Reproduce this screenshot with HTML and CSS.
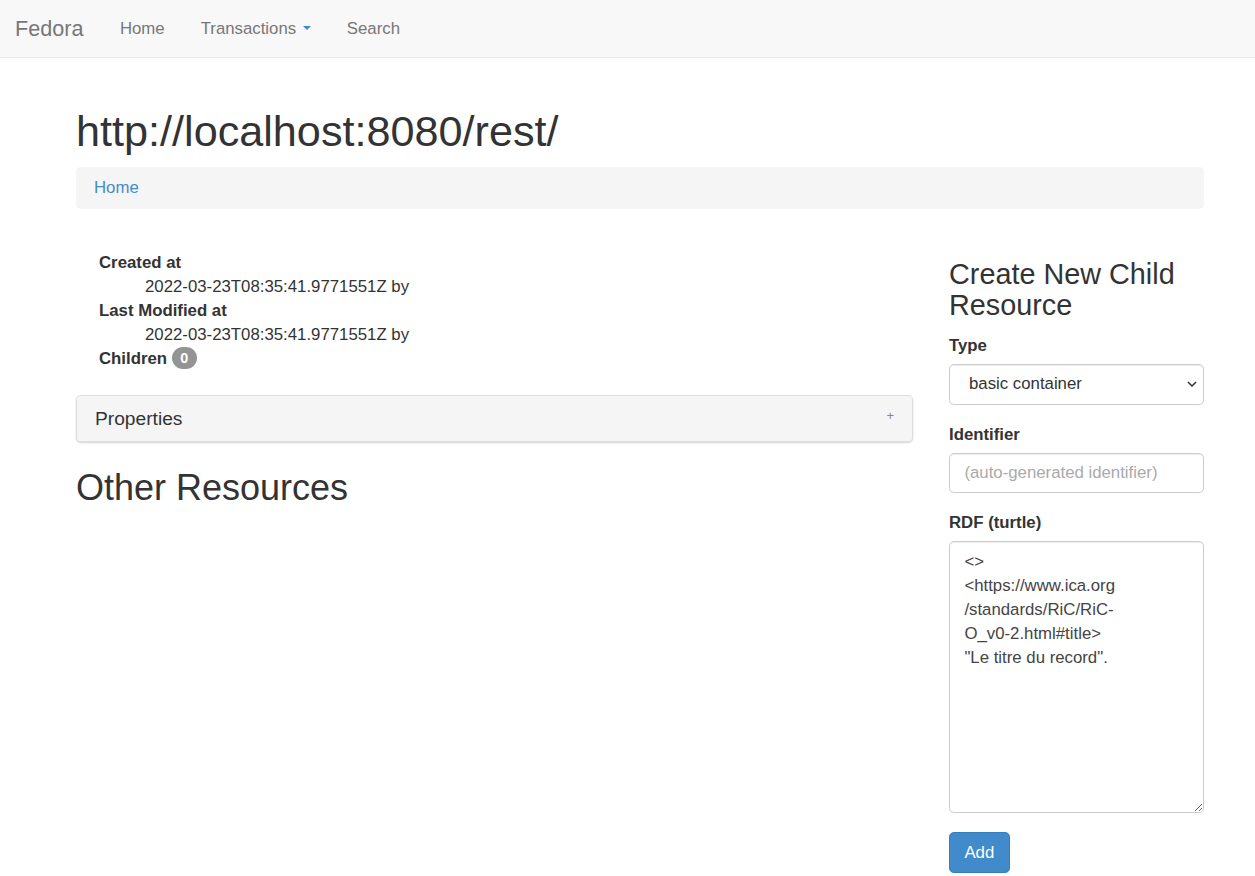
FILE: index.html
```html
<!DOCTYPE html>
<html lang="en">
<head>
<meta charset="utf-8">
<title>Fedora</title>
<link rel="stylesheet" href="styles.css">
</head>
<body>
<nav class="navbar">
  <a class="brand" href="#">Fedora</a>
  <ul class="nav">
    <li><a href="#">Home</a></li>
    <li><a href="#">Transactions <span class="caret"></span></a></li>
    <li><a href="#">Search</a></li>
  </ul>
</nav>
<div class="container">
  <h1 class="page-title">http://localhost:8080/rest/</h1>
  <ol class="breadcrumb">
    <li><a href="#">Home</a></li>
  </ol>
  <div class="row">
    <div class="main-col">
      <dl class="meta">
        <dt>Created at</dt>
        <dd>2022-03-23T08:35:41.9771551Z by</dd>
        <dt>Last Modified at</dt>
        <dd>2022-03-23T08:35:41.9771551Z by</dd>
        <dt>Children <span class="badge">0</span></dt>
      </dl>
      <div class="panel">
        <div class="panel-heading">
          <span class="panel-title">Properties</span>
          <span class="toggle">+</span>
        </div>
      </div>
      <h2 class="section-title">Other Resources</h2>
    </div>
    <div class="side-col">
      <h3 class="side-title">Create New Child Resource</h3>
      <form class="child-form">
        <div class="form-group">
          <label for="type">Type</label>
          <div class="select-wrap">
            <select id="type" class="form-control select-control">
              <option>basic container</option>
              <option>binary</option>
            </select>
            <svg class="select-arrow" width="10" height="6" viewBox="0 0 10 6" aria-hidden="true"><path d="M1 1 L5 5 L9 1" fill="none" stroke="#333" stroke-width="1.5"/></svg>
          </div>
        </div>
        <div class="form-group">
          <label for="ident">Identifier</label>
          <input id="ident" class="form-control" type="text" placeholder="(auto-generated identifier)">
        </div>
        <div class="form-group">
          <label for="rdf">RDF (turtle)</label>
          <textarea id="rdf" class="form-control rdf-area">&lt;&gt;
&lt;https://www.ica.org
/standards/RiC/RiC-
O_v0-2.html#title&gt;
"Le titre du record".</textarea>
        </div>
        <button type="button" class="btn-primary">Add</button>
      </form>
    </div>
  </div>
</div>
</body>
</html>
```

FILE: styles.css
```css
* { box-sizing: border-box; }

html, body {
  margin: 0;
  padding: 0;
  background: #fff;
}

body {
  font-family: "Liberation Sans", Arial, Helvetica, sans-serif;
  font-size: 16.8px;
  line-height: 24px;
  color: #333;
}

a { color: #428bca; text-decoration: none; }

/* Navbar */
.navbar {
  display: flex;
  align-items: center;
  height: 58px;
  background: #f8f8f8;
  border-bottom: 1px solid #e7e7e7;
}

.brand {
  font-size: 21.6px;
  line-height: 24px;
  color: #777;
  padding: 0 18.5px 0 15px;
}

.nav {
  display: flex;
  list-style: none;
  margin: 0;
  padding: 0;
}

.nav a {
  display: block;
  padding: 0 18px;
  color: #777;
  line-height: 24px;
}

.caret {
  display: inline-block;
  width: 0;
  height: 0;
  vertical-align: middle;
  border-top: 4.6px solid #428bca;
  border-left: 4.6px solid transparent;
  border-right: 4.6px solid transparent;
  margin-top: -2px;
  margin-left: 2px;
}

/* Container */
.container {
  width: 1128px;
  margin-left: 76px;
  padding-top: 24px;
}

.page-title {
  font-size: 43.2px;
  font-weight: normal;
  line-height: 1.1;
  margin: 26px 0 11px;
}

.breadcrumb {
  list-style: none;
  margin: 0 0 24px;
  padding: 9px 18px;
  background: #f5f5f5;
  border-radius: 4.8px;
}

.row {
  display: flex;
  gap: 36px;
}

.main-col { width: 837px; }
.side-col { width: 255px; }

/* Metadata */
.meta {
  margin: 0 0 24px;
  padding: 18px 0 0 23px;
}

.meta dt { font-weight: bold; }
.meta dd { margin-left: 46px; }

.badge {
  display: inline-block;
  min-width: 12px;
  padding: 3.6px 8.4px;
  font-size: 14.4px;
  font-weight: bold;
  line-height: 1;
  color: #fff;
  text-align: center;
  vertical-align: middle;
  background: #949494;
  border-radius: 12px;
  position: relative;
  top: -1px;
}

/* Panel */
.panel {
  border: 1px solid #ddd;
  border-radius: 4.8px;
  background: #fff;
  box-shadow: 0 1px 2px rgba(0, 0, 0, 0.18);
  margin-bottom: 26px;
}

.panel-heading {
  display: flex;
  justify-content: space-between;
  align-items: center;
  background: #f5f5f5;
  padding: 12px 18px;
  border-radius: 4px;
}

.panel-title {
  font-size: 19.2px;
  line-height: 21px;
  color: #333;
}

.toggle {
  font-size: 13px;
  color: #888;
  line-height: 21px;
  position: relative;
  top: -3px;
}

.section-title {
  font-size: 36px;
  font-weight: normal;
  line-height: 1.1;
  margin: 26px 0 12px;
}

/* Side form */
.side-title {
  font-size: 28.8px;
  font-weight: normal;
  line-height: 1.1;
  margin: 26px 0 12px;
}

.form-group { margin-bottom: 18px; }

.form-group label {
  display: block;
  font-weight: bold;
  margin-bottom: 6px;
}

.form-control {
  display: block;
  width: 100%;
  height: 40.8px;
  padding: 7.2px 14.4px;
  font-family: inherit;
  font-size: 16.8px;
  line-height: 24px;
  color: #555;
  background: #fff;
  border: 1px solid #ccc;
  border-radius: 4.8px;
  box-shadow: inset 0 1px 1px rgba(0, 0, 0, 0.075);
}

.select-wrap { position: relative; }

.select-control {
  -webkit-appearance: none;
  appearance: none;
  padding-left: 19px;
  color: #333;
}

.select-arrow {
  position: absolute;
  right: 7px;
  top: 17px;
  pointer-events: none;
}

.form-control::placeholder { color: #aaa; }

.rdf-area {
  height: 272px;
  resize: vertical;
  color: #444;
}

.btn-primary {
  display: inline-block;
  margin-top: 1px;
  padding: 7.2px 14.4px;
  font-family: inherit;
  font-size: 16.8px;
  line-height: 24px;
  color: #fff;
  background: #428bca;
  border: 1px solid #357ebd;
  border-radius: 4.8px;
  cursor: pointer;
}
```
